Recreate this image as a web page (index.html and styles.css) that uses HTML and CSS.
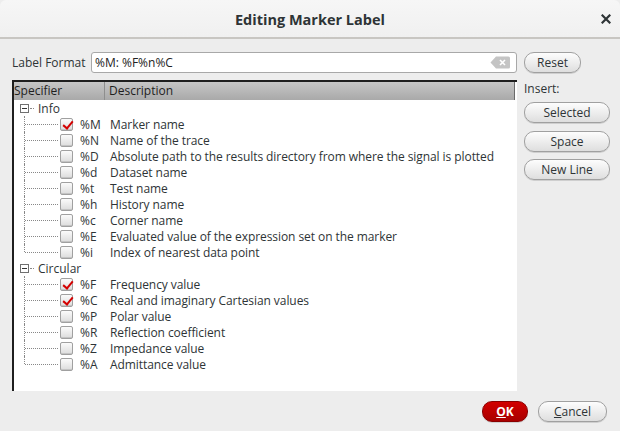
FILE: index.html
```html
<!DOCTYPE html>
<html>
<head>
<meta charset="utf-8">
<link rel="stylesheet" href="styles.css">
</head>
<body>
<div class="dialog">
  <div class="titlebar">
    <div class="title">Editing Marker Label</div>
    <div class="close">
      <svg width="10" height="10" viewBox="0 0 10 10"><path d="M1.5 1.5 L8.5 8.5 M8.5 1.5 L1.5 8.5" stroke="#2e3436" stroke-width="2.2" stroke-linecap="square"/></svg>
    </div>
  </div>
  <div class="content">
    <div class="main">
      <div class="format-row">
        <span class="label">Label Format</span>
        <div class="input">
          <span class="input-text">%M: %F%n%C</span>
          <svg class="clear" width="20" height="13" viewBox="0 0 20 13"><path d="M6 0.5 H18.5 A1.5 1.5 0 0 1 20 2 V11 A1.5 1.5 0 0 1 18.5 12.5 H6 L0.5 6.5 Z" fill="#c4c4c4"/><path d="M10 4 L15 9 M15 4 L10 9" stroke="#fff" stroke-width="1.6"/></svg>
        </div>
      </div>
      <div class="tree">
        <div class="header">
          <div class="h-spec">Specifier</div>
          <div class="h-desc">Description</div>
        </div>
        <div class="body">
          <div class="group">
            <div class="parent"><span class="exp"></span><span class="hdash"></span><span class="ptext">Info</span></div>
            <div class="child"><span class="conn"></span><span class="cb checked"></span><span class="spec">%M</span><span class="desc">Marker name</span></div>
            <div class="child"><span class="conn"></span><span class="cb"></span><span class="spec">%N</span><span class="desc">Name of the trace</span></div>
            <div class="child"><span class="conn"></span><span class="cb"></span><span class="spec">%D</span><span class="desc">Absolute path to the results directory from where the signal is plotted</span></div>
            <div class="child"><span class="conn"></span><span class="cb"></span><span class="spec">%d</span><span class="desc">Dataset name</span></div>
            <div class="child"><span class="conn"></span><span class="cb"></span><span class="spec">%t</span><span class="desc">Test name</span></div>
            <div class="child"><span class="conn"></span><span class="cb"></span><span class="spec">%h</span><span class="desc">History name</span></div>
            <div class="child"><span class="conn"></span><span class="cb"></span><span class="spec">%c</span><span class="desc">Corner name</span></div>
            <div class="child"><span class="conn"></span><span class="cb"></span><span class="spec">%E</span><span class="desc">Evaluated value of the expression set on the marker</span></div>
            <div class="child last"><span class="conn"></span><span class="cb"></span><span class="spec">%i</span><span class="desc">Index of nearest data point</span></div>
          </div>
          <div class="group">
            <div class="parent"><span class="exp"></span><span class="hdash"></span><span class="ptext">Circular</span></div>
            <div class="child"><span class="conn"></span><span class="cb checked"></span><span class="spec">%F</span><span class="desc">Frequency value</span></div>
            <div class="child"><span class="conn"></span><span class="cb checked"></span><span class="spec">%C</span><span class="desc">Real and imaginary Cartesian values</span></div>
            <div class="child"><span class="conn"></span><span class="cb"></span><span class="spec">%P</span><span class="desc">Polar value</span></div>
            <div class="child"><span class="conn"></span><span class="cb"></span><span class="spec">%R</span><span class="desc">Reflection coefficient</span></div>
            <div class="child"><span class="conn"></span><span class="cb"></span><span class="spec">%Z</span><span class="desc">Impedance value</span></div>
            <div class="child last"><span class="conn"></span><span class="cb"></span><span class="spec">%A</span><span class="desc">Admittance value</span></div>
          </div>
        </div>
      </div>
    </div>
    <div class="side">
      <button class="btn reset">Reset</button>
      <div class="insert">Insert:</div>
      <button class="btn wide">Selected</button>
      <button class="btn wide">Space</button>
      <button class="btn wide">New Line</button>
    </div>
  </div>
  <div class="footer">
    <button class="btn ok"><u>O</u>K</button>
    <button class="btn cancel"><u>C</u>ancel</button>
  </div>
</div>
</body>
</html>
```
FILE: styles.css
```css
* { box-sizing: border-box; }
html, body { margin: 0; padding: 0; }
body {
  width: 620px;
  height: 431px;
  background: #ededed;
  font-family: "Open Sans", "Noto Sans", sans-serif;
  font-size: 12px;
  color: #2e3436;
  overflow: hidden;
}
.dialog { width: 620px; height: 431px; display: flex; flex-direction: column; }
.titlebar {
  height: 39px;
  background: linear-gradient(#f6f6f6, #f0f0f0);
  border-bottom: 2px solid #c8c6c2;
  border-radius: 6px 6px 0 0;
  display: flex;
  align-items: center;
  justify-content: center;
  position: relative;
  flex-shrink: 0;
}
.title { font-weight: bold; font-size: 14.5px; color: #2e3436; padding-top: 1px; }
.close { position: absolute; right: 9px; top: 14px; width: 10px; height: 10px; display: flex; }
.content { display: flex; padding: 13px 0 0 12px; gap: 7px; }
.main { width: 505px; display: flex; flex-direction: column; }
.format-row { display: flex; align-items: center; height: 21px; }
.label { width: 79px; color: #2e3436; }
.input {
  flex: 1;
  height: 21px;
  background: #fff;
  border: 1px solid #a8a8a8;
  border-radius: 3px;
  display: flex;
  align-items: center;
  padding: 0 6px 0 3px;
}
.input-text { flex: 1; color: #222; }
.clear { display: block; }
.tree {
  margin-top: 7px;
  height: 311px;
  background: #fff;
  border-left: 2px solid #1e1e1e;
  border-top: 2px solid #1e1e1e;
  display: flex;
  flex-direction: column;
}
.header {
  height: 18px;
  display: flex;
  background: linear-gradient(#c6c6c6, #a9a9a9);
  margin-right: 2px;
  border-right: 1px solid #6a6a6a;
}
.h-spec { width: 91px; border-right: 1px solid #8e8e8e; line-height: 17px; color: #1e1e1e; }
.h-desc { flex: 1; padding-left: 4px; line-height: 17px; color: #1e1e1e; }
.parent { height: 16px; display: flex; align-items: center; padding-left: 6px; }
.exp {
  width: 9px; height: 9px;
  border: 1px solid #707070;
  background: #fff;
  position: relative;
  flex-shrink: 0;
}
.exp::after { content: ""; position: absolute; left: 1px; right: 1px; top: 3px; height: 1px; background: #333; }
.hdash { width: 4px; border-top: 1px dotted #888; margin: 0 4px 0 1px; height: 0; }
.ptext { color: #2e3436; }
.child { height: 16px; display: flex; align-items: center; padding-left: 10px; }
.conn { width: 36px; height: 16px; position: relative; flex-shrink: 0; }
.conn::before { content: ""; position: absolute; left: 0; top: 0; bottom: 0; border-left: 1px dotted #888; }
.last .conn::before { bottom: 8px; }
.conn::after { content: ""; position: absolute; left: 1px; right: 2px; top: 8px; border-top: 1px dotted #888; }
.cb {
  width: 13px; height: 13px;
  border: 1px solid #a0a0a0;
  border-radius: 2px;
  background: linear-gradient(#fbfbfb, #dcdcdc);
  box-shadow: inset 0 -1px 0 #c4c4c4;
  flex-shrink: 0;
  position: relative;
}
.cb.checked::after {
  content: "";
  position: absolute;
  left: 4px; top: 0px;
  width: 4px; height: 8px;
  border: solid #d40000;
  border-width: 0 2.5px 2.5px 0;
  transform: rotate(40deg);
}
.spec { width: 30px; margin-left: 7px; color: #2e3436; }
.desc { color: #2e3436; white-space: nowrap; letter-spacing: -0.07px; }
.side { display: flex; flex-direction: column; align-items: flex-start; }
.btn {
  font-family: "Open Sans", "Noto Sans", sans-serif;
  font-size: 12px;
  color: #2e3436;
  height: 21px;
  border: 1px solid #a0a0a0;
  border-radius: 10px;
  background: linear-gradient(#fdfdfd, #dedede);
  box-shadow: 0 1px 0 #cfcfcf;
  padding: 0;
  display: flex;
  align-items: center;
  justify-content: center;
}
.reset { width: 57px; }
.insert { margin-top: 7px; height: 17px; }
.wide { width: 86px; margin-top: 5px; }
.wide + .wide { margin-top: 7.5px; }
.footer { display: flex; justify-content: flex-end; gap: 10px; padding: 10px 13px 0 0; }
.ok {
  width: 46px;
  background: linear-gradient(#d20000, #a80000);
  border-color: #8a0000;
  color: #fff;
  font-weight: bold;
}
.ok u, .cancel u { text-decoration-thickness: 1px; }
.cancel { width: 69px; }
```
